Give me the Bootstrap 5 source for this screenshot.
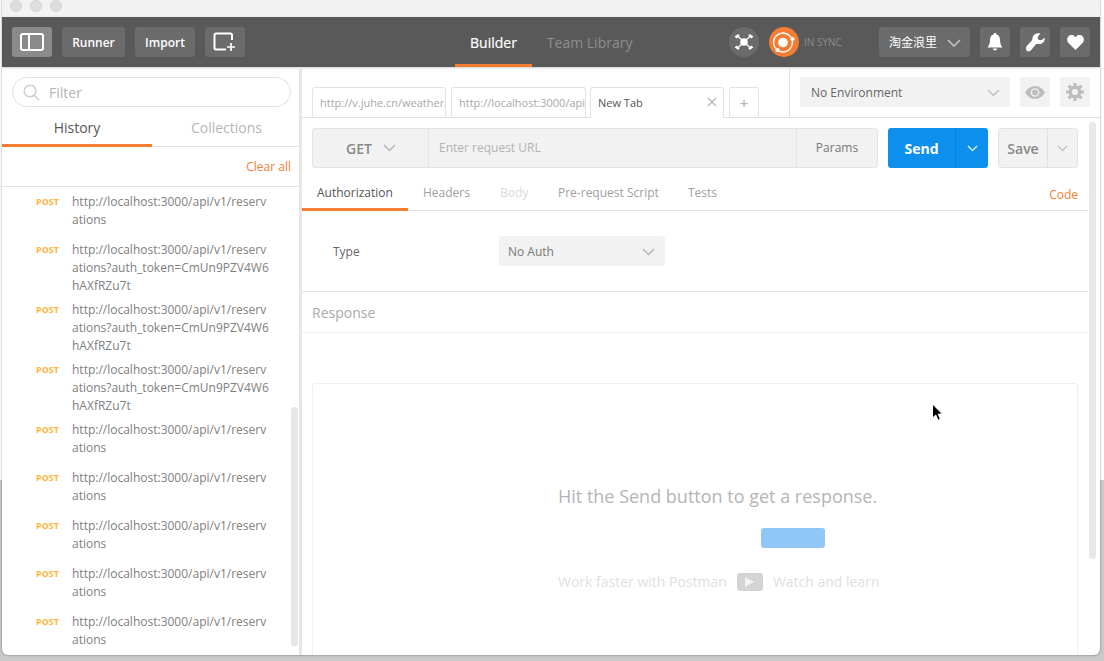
<!DOCTYPE html>
<html lang="en">
<head>
    <meta charset="UTF-8">
    <meta name="viewport" content="width=device-width, initial-scale=1.0">
    <title>Postman</title>
    <link href="https://cdn.jsdelivr.net/npm/bootstrap@5.3.0/dist/css/bootstrap.min.css" rel="stylesheet">
    <style>
        html, body { height: 661px; overflow: hidden; }
        body {
            font-family: "Open Sans", "Noto Sans CJK SC", sans-serif;
            font-size: 12px;
            color: #808080;
            background: linear-gradient(#fff 480px, #c9c9c9 480px);
        }

        /* window */
        .app-window {
            position: relative;
            width: 1098px;
            height: 655px;
            margin-left: 2px;
            background: #fff;
            border-radius: 0 0 6px 6px;
            box-shadow: 0 0 2px rgba(0, 0, 0, .55);
            overflow: hidden;
        }
        .title-bar { height: 17px; background: #f2f2f2; padding-left: 8px; gap: 8px; }
        .traffic-dot { width: 12px; height: 12px; margin-top: -5px; border-radius: 50%; background: #dedede; border: 1px solid #d4d4d4; }

        /* header */
        .top-bar { position: relative; height: 50px; background: #595959; padding: 10px; box-shadow: 0 1px 2px rgba(0, 0, 0, .2); }
        .bar-btn {
            height: 30px; padding: 2px 0 0 0; color: #fff; border: 0; border-radius: 3px;
            background: #6b6b6b; font-size: 12px; font-weight: 600;
        }
        .bar-btn:hover { background: #6b6b6b; color: #fff; }
        .bar-btn.is-on { background: #8a8a8a; }
        .bar-gap { margin-left: 10px; }
        .w-toggle, .w-new { width: 40px; padding: 0; }
        .w-runner { width: 63px; }
        .w-import { width: 60px; }
        .w-square { width: 30px; padding: 0; }
        .w-team { width: 91px; padding: 1px 9px 0 10px; font-size: 12px; font-weight: 400; }
        .view-tabs { position: absolute; left: 453px; top: 0; height: 50px; }
        .view-tab { display: block; height: 50px; padding: 0 15px; line-height: 51px; font-size: 14px; color: #8e8e8e; text-decoration: none; }
        .view-tab.is-on { color: #fff; border-bottom: 3px solid #f47d32; -webkit-text-stroke: .2px #fff; }
        .round-icon { width: 30px; height: 30px; border-radius: 50%; }
        .icon-sync { background: #6b6b6b; }
        .icon-orbit { background: #f47d32; margin-left: 10px; }
        .sync-text { font-size: 10px; color: #8c8c8c; margin-left: 5px; width: 75px; }

        /* sidebar */
        .work-area { height: 588px; }
        .side-panel { position: relative; width: 300px; flex: none; border-right: 3px solid #e6e6e6; overflow: hidden; }
        .filter-box { margin: 10px 8px 0 10px; height: 30px; border: 1px solid #e0e0e0; border-radius: 15px; padding-left: 10px; gap: 9px; color: #b5b5b5; font-size: 14px; }
        .side-tabs { margin-top: 6px; height: 34px; border-bottom: 1px solid #e3e3e3; }
        .side-tab { width: 149px; flex: none; height: 34px; text-align: center; line-height: 30px; font-size: 14px; color: #b5b5b5; }
        .side-tab.is-on { width: 150px; color: #555; border-bottom: 3px solid #f47d32; }
        .clear-row { height: 40px; padding-right: 8px; border-bottom: 1px solid #e3e3e3; color: #f47d32; line-height: 39px; text-align: right; }
        .history-item { min-height: 48px; padding: 6px 0 0 34px; gap: 12px; line-height: 18px; }
        .history-method { width: 24px; flex: none; font-size: 9px; font-weight: 700; color: #ffb340; text-align: left; line-height: 17px; }
        .history-url { width: 198px; height: fit-content; word-break: break-all; color: #808080; }
        .side-scroll { position: absolute; left: 289px; top: 340px; width: 7px; height: 239px; border-radius: 3px; background: #e6e6e6; }

        /* main */
        .main-panel { position: relative; flex: 1; min-width: 0; }
        .tab-strip { height: 51px; border-bottom: 1px solid #e0e0e0; }
        .tabs-left { flex: 1; padding: 20px 0 0 10px; gap: 5px; }
        .req-tab {
            height: 31px; padding: 0 7px; overflow: hidden; white-space: nowrap; color: #a8a8a8;
            border: 1px solid #e3e3e3; border-bottom: 0; border-radius: 3px 3px 0 0; line-height: 30px; font-size: 11px;
        }
        .req-tab.w-one { width: 134px; }
        .req-tab.w-two { width: 135px; margin-right: -1px; }
        .req-tab.is-on { width: 134px; color: #555; background: #fff; position: relative; z-index: 1; }
        .tab-close { position: absolute; right: 6px; top: 9px; }
        .req-tab.w-plus { width: 30px; padding: 0; text-align: center; font-size: 15px; font-weight: 600; color: #b5b5b5; }
        .env-area { width: 311px; border-left: 1px solid #e0e0e0; padding: 10px 10px 0 10px; }
        .env-select { width: 210px; height: 30px; padding: 2px 10px 0 11px; background: #f2f2f2; border-radius: 3px; color: #666; }
        .env-icon { width: 30px; height: 30px; margin-left: 10px; background: #f2f2f2; border-radius: 3px; }

        .request-row { padding: 10px 10px 0 10px; }
        .url-group { width: 566px; height: 40px; background: #f2f2f2; border: 1px solid #e3e3e3; border-radius: 3px; }
        .method-cell { width: 116px; border-right: 1px solid #e3e3e3; padding-left: 33px; gap: 11px; font-size: 14px; font-weight: 600; color: #8a8a8a; }
        .url-cell { flex: 1; padding: 0 10px; color: #b3b3b3; }
        .params-cell { width: 81px; border-left: 1px solid #e3e3e3; color: #777; text-align: center; }
        .send-btn { width: 100px; height: 40px; margin-left: 10px; background: #0d8fee; border-radius: 3px; color: #fff; font-size: 14px; font-weight: 700; }
        .send-label { width: 68px; text-align: center; border-right: 1px solid #0b80d6; }
        .send-caret { width: 32px; }
        .save-btn { width: 80px; height: 40px; margin-left: 10px; background: #f2f2f2; border: 1px solid #e3e3e3; border-radius: 3px; color: #888; font-size: 14px; font-weight: 600; }
        .save-label { width: 49px; text-align: center; border-right: 1px solid #e0e0e0; }
        .save-caret { width: 29px; }

        .builder-tabs { margin: 11px 12px 0 0; height: 32px; border-bottom: 1px solid #e3e3e3; }
        .builder-tab { height: 32px; line-height: 28px; color: #a0a0a0; }
        .builder-tab.is-on { width: 106px; padding-left: 15px; color: #555; border-bottom: 3px solid #f47d32; }
        .builder-tab.t-headers { margin-left: 15px; width: 77px; }
        .builder-tab.t-body { width: 58px; color: #dadada; }
        .builder-tab.t-pre { width: 130px; }
        .builder-code { margin-left: auto; margin-right: 10px; margin-top: 2px; height: 29px; color: #f47d32; }
        .auth-row { margin-right: 12px; height: 81px; border-bottom: 1px solid #e3e3e3; padding: 25px 0 0 31px; }
        .auth-label { width: 166px; height: 30px; padding-top: 2px; color: #666; }
        .auth-select { width: 166px; height: 30px; padding: 2px 10px 0 9px; background: #f2f2f2; border-radius: 3px; color: #777; }
        .response-head { margin-right: 12px; height: 41px; padding-left: 10px; border-bottom: 1px solid #f0f0f0; font-size: 14px; line-height: 42px; color: #aaa; }
        .response-box { margin: 50px 22px 0 10px; height: 320px; border: 1px solid #efefef; border-radius: 3px; padding: 100px 0 0 245px; }
        .response-hint { font-size: 18px; line-height: 24px; color: #b5b5b5; }
        .ghost-send { width: 64px; height: 20px; margin: 20px 0 0 203px; background: #90c7f6; border-radius: 3px; }
        .learn-row { margin-top: 23px; gap: 10px; color: #e0e0e0; font-size: 14px; }
        .play-chip { width: 26px; height: 18px; background: #d4d4d4; border-radius: 3px; }
        .main-scroll { position: absolute; left: 787px; top: 55px; width: 7px; height: 437px; border-radius: 3px; background: #e8e8e8; }
        .mouse-arrow { position: absolute; left: 929px; top: 403px; z-index: 5; }
    </style>
</head>
<body>

    <div class="app-window">
        <div class="title-bar d-flex align-items-center">
            <span class="traffic-dot"></span><span class="traffic-dot"></span><span class="traffic-dot"></span>
        </div>

        <header class="top-bar d-flex align-items-center">
            <button class="btn bar-btn is-on w-toggle d-flex align-items-center justify-content-center" type="button" aria-label="Toggle sidebar">
                <svg width="24" height="18" viewBox="0 0 24 18" fill="none" stroke="#fff" stroke-width="2"><rect x="1" y="1" width="22" height="16" rx="2"/><path d="M9 1v16"/></svg>
            </button>
            <button class="btn bar-btn w-runner bar-gap" type="button">Runner</button>
            <button class="btn bar-btn w-import bar-gap" type="button">Import</button>
            <button class="btn bar-btn w-new bar-gap d-flex align-items-center justify-content-center" type="button" aria-label="New window">
                <svg width="24" height="20" viewBox="0 0 24 20" fill="none" stroke="#fff" stroke-width="2"><path d="M19 8V3a1.500 1.500 0 0 0-1.500-1.500H3A1.500 1.500 0 0 0 1.500 3v13A1.500 1.500 0 0 0 3 17.500h10"/><path d="M18 11v8M14 15h8" stroke-width="1.700"/></svg>
            </button>

            <nav class="view-tabs d-flex">
                <a class="view-tab is-on" href="#">Builder</a>
                <a class="view-tab" href="#">Team Library</a>
            </nav>

            <div class="ms-auto d-flex align-items-center">
                <span class="round-icon icon-sync d-flex align-items-center justify-content-center">
                    <svg width="20" height="18" viewBox="0 0 20 18"><circle cx="10" cy="9" r="3.800" fill="#fff"/><path d="M1.500 4.500 5 2M15 2l3.500 2.500M1.500 13.500 5 16M15 16l3.500-2.500" stroke="#fff" stroke-width="2.600"/><path d="M4 3.500 9 8M16 3.500 11 8M4 14.500 9 10M16 14.500 11 10" stroke="#fff" stroke-width="1.200"/></svg>
                </span>
                <span class="round-icon icon-orbit d-flex align-items-center justify-content-center">
                    <svg width="30" height="30" viewBox="0 0 30 30" fill="none"><circle cx="14" cy="15.500" r="9.500" stroke="#fff" stroke-width="1.300"/><circle cx="14" cy="15.500" r="4.800" fill="#fff"/><circle cx="23.500" cy="12" r="2" fill="#fff"/><circle cx="8.500" cy="23" r="2" fill="#fff"/></svg>
                </span>
                <span class="sync-text">IN SYNC</span>
                <button class="btn bar-btn w-team d-flex align-items-center justify-content-between" type="button">
                    <span>淘金浪里</span>
                    <svg width="14" height="8" viewBox="0 0 14 8" fill="none" stroke="#c8c8c8" stroke-width="1.500"><path d="M1 1l6 6 6-6"/></svg>
                </button>
                <button class="btn bar-btn w-square bar-gap d-flex align-items-center justify-content-center" type="button" aria-label="Notifications">
                    <svg width="16" height="18" viewBox="0 0 16 18" fill="#fff"><path d="M8 0c1 0 1.500.7 1.500 1.500C12 2.300 13 4.500 13 7c0 3.500 1 5.500 2.500 7.500H.5C2 12.500 3 10.500 3 7c0-2.500 1-4.700 3.500-5.500C6.500.7 7 0 8 0z"/><path d="M5.800 15.500h4.400C10 16.800 9.100 17.500 8 17.500s-2-.7-2.200-2z"/></svg>
                </button>
                <button class="btn bar-btn w-square bar-gap d-flex align-items-center justify-content-center" type="button" aria-label="Settings">
                    <svg width="20" height="19" viewBox="0 0 20 19" fill="#fff"><path d="M19.700 4.800c.3 2.600-.9 4.700-3 5.700-1.500.7-3 .6-4.300.2l-1.200.3-5 6c-1.200 1.400-3.200 1.700-4.600.7C1 16.600.6 14.600 1.800 13l5-5.500.6-1.500C7.300 4 8.300 2 10.300 1c1.600-.9 3.500-1 5-.4L12.600 4l.8 2.700 2.800.6z"/></svg>
                </button>
                <button class="btn bar-btn w-square bar-gap d-flex align-items-center justify-content-center" type="button" aria-label="Favourite">
                    <svg width="17" height="15" viewBox="0 0 17 15" fill="#fff"><path d="M8.500 15 1.500 8C-.3 6.200-.3 3.200 1.300 1.500 3-.4 6-.4 7.700 1.400l.8.900.8-.9C11-.4 14-.4 15.700 1.500c1.600 1.700 1.600 4.700-.2 6.500z"/></svg>
                </button>
            </div>
        </header>

        <div class="work-area d-flex">
            <aside class="side-panel">
                <div class="filter-box d-flex align-items-center">
                    <svg width="17" height="17" viewBox="0 0 17 17" fill="none" stroke="#cfcfcf" stroke-width="1.500"><circle cx="7" cy="7" r="5.800"/><path d="M11.200 11.200 16 16"/></svg>
                    <span>Filter</span>
                </div>
                <div class="side-tabs d-flex">
                    <div class="side-tab is-on">History</div>
                    <div class="side-tab">Collections</div>
                </div>
                <div class="clear-row">Clear all</div>
                <div id="historyList"></div>
                <div class="side-scroll"></div>
            </aside>

            <main class="main-panel">
                <div class="tab-strip d-flex">
                    <div class="tabs-left d-flex">
                        <div class="req-tab w-one">http://v.juhe.cn/weather/</div>
                        <div class="req-tab w-two">http://localhost:3000/api</div>
                        <div class="req-tab is-on">New Tab
                            <svg class="tab-close" width="10" height="10" viewBox="0 0 10 10" stroke="#b5b5b5" stroke-width="1.200"><path d="M1 1l8 8M9 1l-8 8"/></svg>
                        </div>
                        <div class="req-tab w-plus">+</div>
                    </div>
                    <div class="env-area d-flex">
                        <div class="env-select d-flex align-items-center justify-content-between">
                            <span>No Environment</span>
                            <svg width="13" height="8" viewBox="0 0 13 8" fill="none" stroke="#c0c0c0" stroke-width="1.500"><path d="M1 1l5.500 5.500L12 1"/></svg>
                        </div>
                        <div class="env-icon d-flex align-items-center justify-content-center">
                            <svg width="20" height="13" viewBox="0 0 20 13"><path fill="#bdbdbd" d="M10 0c4.500 0 8 3 10 6.500C18 10 14.500 13 10 13S2 10 0 6.500C2 3 5.500 0 10 0z"/><circle cx="10" cy="6.500" r="4.300" fill="#f2f2f2"/><circle cx="10" cy="6.500" r="3" fill="#bdbdbd"/></svg>
                        </div>
                        <div class="env-icon d-flex align-items-center justify-content-center">
                            <svg width="18" height="18" viewBox="0 0 18 18" fill="none" stroke="#bdbdbd"><circle cx="9" cy="9" r="4.800" stroke-width="3.400"/><path d="M9 0v4M9 14v4M0 9h4M14 9h4M2.600 2.600l2.800 2.800M12.600 12.600l2.800 2.800M15.400 2.600l-2.800 2.800M5.400 12.600l-2.800 2.800" stroke-width="3"/></svg>
                        </div>
                    </div>
                </div>

                <div class="request-row d-flex">
                    <div class="url-group d-flex">
                        <div class="method-cell d-flex align-items-center">
                            <span>GET</span>
                            <svg width="13" height="8" viewBox="0 0 13 8" fill="none" stroke="#b5b5b5" stroke-width="1.500"><path d="M1 1l5.500 5.500L12 1"/></svg>
                        </div>
                        <div class="url-cell d-flex align-items-center">Enter request URL</div>
                        <div class="params-cell d-flex align-items-center justify-content-center">Params</div>
                    </div>
                    <div class="send-btn d-flex">
                        <div class="send-label d-flex align-items-center justify-content-center">Send</div>
                        <div class="send-caret d-flex align-items-center justify-content-center">
                            <svg width="11" height="7" viewBox="0 0 11 7" fill="none" stroke="#d5ecfc" stroke-width="1.500"><path d="M1 1l4.500 4.500L10 1"/></svg>
                        </div>
                    </div>
                    <div class="save-btn d-flex">
                        <div class="save-label d-flex align-items-center justify-content-center">Save</div>
                        <div class="save-caret d-flex align-items-center justify-content-center">
                            <svg width="11" height="7" viewBox="0 0 11 7" fill="none" stroke="#bdbdbd" stroke-width="1.200"><path d="M1 1l4.500 4.500L10 1"/></svg>
                        </div>
                    </div>
                </div>

                <div class="builder-tabs d-flex">
                    <div class="builder-tab is-on">Authorization</div>
                    <div class="builder-tab t-headers">Headers</div>
                    <div class="builder-tab t-body">Body</div>
                    <div class="builder-tab t-pre">Pre-request Script</div>
                    <div class="builder-tab">Tests</div>
                    <div class="builder-tab builder-code">Code</div>
                </div>

                <div class="auth-row d-flex">
                    <div class="auth-label d-flex align-items-center">Type</div>
                    <div class="auth-select d-flex align-items-center justify-content-between">
                        <span>No Auth</span>
                        <svg width="13" height="8" viewBox="0 0 13 8" fill="none" stroke="#b5b5b5" stroke-width="1.500"><path d="M1 1l5.500 5.500L12 1"/></svg>
                    </div>
                </div>

                <div class="response-head">Response</div>

                <div class="response-box">
                    <div class="response-hint">Hit the Send button to get a response.</div>
                    <div class="ghost-send"></div>
                    <div class="learn-row d-flex align-items-center">
                        <span>Work faster with Postman</span>
                        <span class="play-chip d-flex align-items-center justify-content-center">
                            <svg width="9" height="10" viewBox="0 0 9 10" fill="#f4f4f4"><path d="M0 0l9 5-9 5z"/></svg>
                        </span>
                        <span>Watch and learn</span>
                    </div>
                </div>

                <div class="main-scroll"></div>
            </main>
        </div>

        <svg class="mouse-arrow" width="13" height="19" viewBox="0 0 13 19"><path d="M1.500 1v14l3.300-3 2.200 5.300 2.400-1-2.200-5.200h4.300z" fill="#000" stroke="#fff" stroke-width="1"/></svg>
    </div>

    <script>
        // history rows in the sidebar
        const plain = "http://localhost:3000/api/v1/reservations";
        const withToken = plain + "?auth_token=CmUn9PZV4W6hAXfRZu7t";
        const rows = [plain, withToken, withToken, withToken, plain, plain, plain, plain, plain];
        document.getElementById("historyList").innerHTML = rows.map((url) => `
            <div class="history-item d-flex">
                <span class="history-method">POST</span>
                <span class="history-url">${url}</span>
            </div>`).join("");
    </script>
    <script src="https://cdn.jsdelivr.net/npm/bootstrap@5.3.0/dist/js/bootstrap.bundle.min.js"></script>
</body>
</html>
